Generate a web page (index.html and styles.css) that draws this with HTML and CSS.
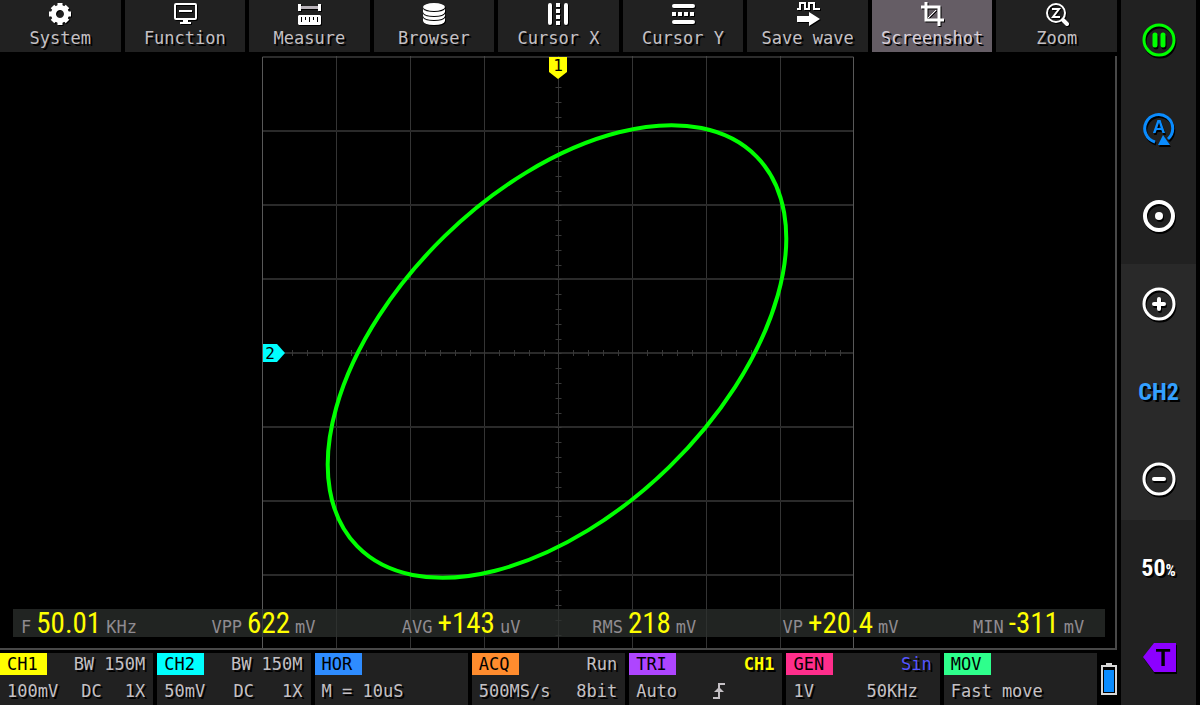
FILE: index.html
```html
<!DOCTYPE html>
<html lang="en">
<head>
    <meta charset="UTF-8">
    <meta name="viewport" content="width=device-width, initial-scale=1.0">
    <title>Oscilloscope</title>
    <link rel="stylesheet" href="styles.css">
</head>
<body>
    <div class="screen">
        <nav class="menu">
            <button class="tab">
                <svg class="icon" viewBox="0 0 24 24"><path fill="none" stroke="#fff" stroke-width="5" d="M12 5.500a6.500 6.500 0 1 0 .01 0z"/><path fill="none" stroke="#fff" stroke-width="5" d="M12 1v3M12 20v3M1 12h3M20 12h3M4.500 4.500l2 2M17.500 17.500l2 2M19.500 4.500l-2 2M6.500 17.500l-2 2"/></svg>
                <span>System</span>
            </button>
            <button class="tab">
                <svg class="icon" viewBox="0 0 24 24"><rect x="2" y="2" width="21" height="15" rx="1" fill="none" stroke="#fff" stroke-width="2"/><path fill="#fff" d="M6 8h13v2H6zM10 18h5v2h3v2H7v-2h3z"/></svg>
                <span>Function</span>
            </button>
            <button class="tab">
                <svg class="icon" viewBox="0 0 24 24"><path fill="#fff" d="M1 2h3v7H1zM21 2h3v7h-3z"/><path fill="#b9b2b9" d="M4 4h17v3H4z"/><path fill="#fff" fill-rule="evenodd" d="M2 13h21l1 1v8l-1 1H2l-1-1v-8zM4 15v5h1v-5zM8 15v3h1v-3zM12 15v5h1v-5zM16 15v3h1v-3zM20 15v5h1v-5z"/></svg>
                <span>Measure</span>
            </button>
            <button class="tab">
                <svg class="icon" viewBox="0 0 24 24"><ellipse cx="12" cy="5" rx="11" ry="4" fill="#fff"/><path fill="#fff" d="M1 7q2 3 11 3t11-3v3q-1 4-11 4T1 10zM1 12q2 3 11 3t11-3v2q-1 4-11 4T1 14zM1 16q2 3 11 3t11-3v3q-1 4-11 4T1 19z"/></svg>
                <span>Browser</span>
            </button>
            <button class="tab">
                <svg class="icon" viewBox="0 0 24 24"><path fill="none" stroke="#fff" stroke-width="4" stroke-linecap="round" d="M4 3v18M20 3v18"/><path fill="#fff" d="M10 1h4v4h-4zM10 7h4v4h-4zM10 13h4v4h-4zM10 19h4v4h-4z"/></svg>
                <span>Cursor X</span>
            </button>
            <button class="tab">
                <svg class="icon" viewBox="0 0 24 24"><path fill="none" stroke="#fff" stroke-width="4" stroke-linecap="round" d="M3 4h19M3 20h19"/><path fill="#fff" d="M1 10h4v4H1zM7 10h4v4H7zM13 10h4v4h-4zM19 10h4v4h-4z"/></svg>
                <span>Cursor Y</span>
            </button>
            <button class="tab">
                <svg class="icon" viewBox="0 0 24 24"><path fill="none" stroke="#fff" stroke-width="2" d="M1 7h3V1h5v6h4V1h5v6h6"/><path fill="#fff" d="M1 14h12v-4l11 7-11 7v-4H1z"/></svg>
                <span>Save wave</span>
            </button>
            <button class="tab active">
                <svg class="icon" viewBox="0 0 24 24"><path fill="none" stroke="#fff" stroke-width="3" d="M6 0v18h18M1 5h18v19"/><path fill="none" stroke="#fff" stroke-width="1" d="M8 16l8-8"/></svg>
                <span>Screenshot</span>
            </button>
            <button class="tab">
                <svg class="icon" viewBox="0 0 24 24"><circle cx="11" cy="11" r="9" fill="none" stroke="#fff" stroke-width="2"/><path fill="none" stroke="#fff" stroke-width="2" d="M7 7h7l-6 8h7"/><path stroke="#fff" stroke-width="4" stroke-linecap="round" d="M18 18l4 4"/></svg>
                <span>Zoom</span>
            </button>
        </nav>

        <main class="scope">
            <svg class="plot" viewBox="0 0 1115 592">
                <!-- divisions, 74 units each -->
                <path class="line-v" d="M336.500 0v592M410.500 0v592M484.500 0v592M558.500 0v592M632.500 0v592M706.500 0v592M780.500 0v592"/>
                <path class="line-h" d="M262 75h592M262 149h592M262 223h592M262 297h592M262 371h592M262 445h592M262 519h592"/>
                <!-- ticks on the centre axes -->
                <path class="ticks" d="M262 297h592M558.500 1v591"/>
                <path class="frame" d="M262.500 592V1h591v591"/>
                <!-- X/Y trace -->
                <ellipse class="trace" cx="557" cy="295.500" rx="279" ry="161" transform="rotate(-44.250 557 295.500)"/>
                <path fill="#ffff00" d="M549 1h18v15l-9 7-9-7z"/>
                <text class="mark" x="558" y="15">1</text>
                <path fill="#00ffff" d="M263 288h14l8 9-8 9h-14z"/>
                <text class="mark" x="270" y="303">2</text>
            </svg>
            <div class="readouts">
                <div class="readout"><span>F</span><b>50.01</b><span>KHz</span></div>
                <div class="readout"><span>VPP</span><b>622</b><span>mV</span></div>
                <div class="readout"><span>AVG</span><b>+143</b><span>uV</span></div>
                <div class="readout"><span>RMS</span><b>218</b><span>mV</span></div>
                <div class="readout"><span>VP</span><b>+20.4</b><span>mV</span></div>
                <div class="readout"><span>MIN</span><b>-311</b><span>mV</span></div>
            </div>
        </main>

        <footer class="status">
            <button class="panel">
                <span class="row top"><span class="badge ch1">CH1</span><span>BW 150M</span></span>
                <span class="row"><span>100mV</span><span>DC</span><span>1X</span></span>
            </button>
            <button class="panel">
                <span class="row top"><span class="badge ch2">CH2</span><span>BW 150M</span></span>
                <span class="row"><span>50mV</span><span>DC</span><span>1X</span></span>
            </button>
            <button class="panel">
                <span class="row top"><span class="badge hor">HOR</span></span>
                <span class="row"><span>M = 10uS</span></span>
            </button>
            <button class="panel">
                <span class="row top"><span class="badge acq">ACQ</span><span>Run</span></span>
                <span class="row"><span>500MS/s</span><span>8bit</span></span>
            </button>
            <button class="panel">
                <span class="row top"><span class="badge tri">TRI</span><span class="source">CH1</span></span>
                <span class="row inset">
                    <span>Auto</span>
                    <svg class="edge" viewBox="0 0 12 16"><path fill="none" stroke="#c4c0c4" stroke-width="2" d="M0 15h6V1h6"/><path fill="#c4c0c4" d="M6 4l5 5H1z"/></svg>
                    <span></span>
                </span>
            </button>
            <button class="panel">
                <span class="row top"><span class="badge gen">GEN</span><span class="wave">Sin</span></span>
                <span class="row inset"><span>1V</span><span>50KHz</span></span>
            </button>
            <button class="panel">
                <span class="row top"><span class="badge mov">MOV</span></span>
                <span class="row"><span>Fast move</span></span>
            </button>
            <svg class="battery" viewBox="0 0 16 32"><path fill="#d8d8d8" d="M5 0h6v3H5z"/><rect x="1" y="3" width="14" height="28" fill="#000" stroke="#d8d8d8" stroke-width="2"/><path fill="#0a8cff" d="M3 7h10v22H3z"/></svg>
        </footer>
    </div>

    <aside class="sidebar">
        <div class="group">
            <button class="key" aria-label="Pause"><svg viewBox="0 0 34 34"><circle cx="17" cy="17" r="15" fill="none" stroke="#00ff00" stroke-width="3"/><path stroke="#00ff00" stroke-width="5" stroke-linecap="round" d="M13 12v10M21 12v10"/></svg></button>
            <button class="key" aria-label="Auto"><svg viewBox="0 0 34 34"><path fill="none" stroke="#0a8cff" stroke-width="3" d="M13 31A14 14 0 1 1 26 28"/><path fill="#0a8cff" d="M21 24l7 10H16z"/><text class="key-a" x="17" y="22">A</text></svg></button>
            <button class="key" aria-label="Single"><svg viewBox="0 0 34 34"><circle cx="17" cy="17" r="14" fill="none" stroke="#fff" stroke-width="4"/><circle cx="17" cy="17" r="4" fill="#fff"/></svg></button>
        </div>
        <div class="group channel">
            <button class="key" aria-label="Increase"><svg viewBox="0 0 34 34"><circle cx="17" cy="17" r="15" fill="none" stroke="#fff" stroke-width="3"/><path stroke="#fff" stroke-width="4" stroke-linecap="round" d="M12 17h10M17 12v10"/></svg></button>
            <button class="key name">CH2</button>
            <button class="key" aria-label="Decrease"><svg viewBox="0 0 34 34"><circle cx="17" cy="17" r="15" fill="none" stroke="#fff" stroke-width="3"/><path stroke="#fff" stroke-width="4" stroke-linecap="round" d="M12 17h10"/></svg></button>
        </div>
        <div class="group trigger">
            <button class="key half">50<small>%</small></button>
            <button class="key" aria-label="Trigger level"><svg viewBox="0 0 34 34"><path fill="#8c00ff" d="M1 17L12 3h22v29H12z"/><text class="key-t" x="21" y="26">T</text></svg></button>
        </div>
    </aside>
</body>
</html>
```
FILE: styles.css
```css
* {
    box-sizing: border-box;
}
body {
    margin: 0;
    height: 100vh;
    display: grid;
    grid-template-columns: 1fr 75px;
    gap: 4px;
    padding-right: 4px;
    background-color: #000;
    color: #c4c0c4;
    font-family: "DejaVu Sans Mono", monospace;
    font-size: 17px;
    line-height: 20px;
}
button {
    margin: 0;
    padding: 0;
    border: 0;
    background: none;
    color: inherit;
    font: inherit;
    text-shadow: 2px 2px 0 #000;
    cursor: pointer;
}
svg {
    display: block;
}
.screen {
    display: grid;
    grid-template-rows: 52px 1fr 55px;
    min-width: 0;
    min-height: 0;
}

/* top menu */
.menu {
    display: grid;
    grid-template-columns: repeat(9, 1fr);
    gap: 4px;
}
.tab {
    display: flex;
    flex-direction: column;
    align-items: center;
    gap: 2px;
    padding-top: 2px;
    background-color: #212121;
    white-space: nowrap;
}
.tab.active {
    background-color: #655d65;
    color: #d8cfd8;
}
.icon {
    width: 24px;
    height: 24px;
    filter: drop-shadow(1px 1px 0 #000);
}

/* plot */
.scope {
    position: relative;
    min-height: 0;
    margin-top: 4px;
    border-right: 2px solid #484848;
    border-bottom: 2px solid #484848;
}
.plot {
    width: 100%;
    height: 100%;
}
.line-v, .line-h, .ticks, .frame, .trace {
    fill: none;
}
.line-v {
    stroke: #343434;
}
.line-h {
    stroke: #2a2a2a;
    stroke-width: 2;
}
.ticks {
    stroke: #383838;
    stroke-width: 6;
    stroke-dasharray: 1 14 1 14 1 14 1 14 1 13;
}
.frame {
    stroke: #585858;
}
.trace {
    stroke: #00ff00;
    stroke-width: 4;
}
.mark {
    font-size: 16px;
    text-anchor: middle;
}
.readouts {
    position: absolute;
    left: 13px;
    right: 10px;
    bottom: 11px;
    height: 28px;
    display: grid;
    grid-template-columns: repeat(5, 1fr) 104px;
    align-items: center;
    padding: 0 28px 0 8px;
    background-color: rgba(44, 48, 46, 0.75);
}
.readout {
    display: flex;
    align-items: baseline;
    gap: 5px;
    color: #8f8b90;
    white-space: nowrap;
}
.readout b {
    color: #ffff00;
    font-family: "Liberation Sans Narrow", "Roboto Condensed", Roboto, sans-serif;
    font-size: 29px;
    font-weight: normal;
    line-height: 28px;
}

/* bottom panels */
.status {
    display: grid;
    grid-template-columns: repeat(7, 1fr) 16px;
    gap: 4px;
    padding-top: 3px;
}
.panel {
    background-color: #212121;
    white-space: nowrap;
}
.row {
    display: flex;
    justify-content: space-between;
    align-items: center;
    height: 30px;
    padding: 2px 8px 0 7px;
}
.row.top {
    height: 22px;
    padding-top: 0;
    padding-left: 0;
}
.row.inset {
    padding-right: 22px;
}
.badge {
    width: 47px;
    padding-left: 7px;
    color: #000;
    line-height: 22px;
    text-align: left;
    text-shadow: none;
}
.ch1 {
    background-color: #ffff00;
}
.ch2 {
    background-color: #00ffff;
}
.hor {
    background-color: #2e8cff;
}
.acq {
    background-color: #ff8c2e;
}
.tri {
    background-color: #ae45ff;
}
.gen {
    background-color: #ff2e8c;
}
.mov {
    background-color: #2eff8c;
}
.source {
    color: #ffff00;
    font-weight: bold;
}
.wave {
    color: #5555ff;
}
.edge {
    width: 12px;
    height: 16px;
}
.battery {
    align-self: center;
    width: 16px;
    height: 32px;
}

/* right hand keys */
.sidebar {
    display: grid;
    grid-template-rows: 264fr 256fr 185fr;
    background-color: #212121;
}
.group {
    display: flex;
    flex-direction: column;
    justify-content: space-between;
    align-items: center;
    padding: 23px 0 31px;
}
.group.channel {
    padding-bottom: 24px;
    background-color: #292929;
}
.group.trigger {
    padding-top: 32px;
}
.key {
    min-width: 34px;
    height: 34px;
}
.key svg {
    width: 34px;
    height: 34px;
    filter: drop-shadow(1px 2px 0 #000);
}
.key-a {
    fill: #0a8cff;
    font: bold 18px "Liberation Sans", sans-serif;
    text-anchor: middle;
    text-shadow: none;
}
.key-t {
    font: bold 24px "Liberation Sans", sans-serif;
    text-anchor: middle;
    text-shadow: none;
}
.name, .half {
    font-family: "Liberation Sans Narrow", "Roboto Condensed", Roboto, sans-serif;
    font-size: 24px;
    font-weight: bold;
}
.name {
    color: #33a0ff;
}
.half {
    color: #fff;
}
.half small {
    font-size: 16px;
}
```
